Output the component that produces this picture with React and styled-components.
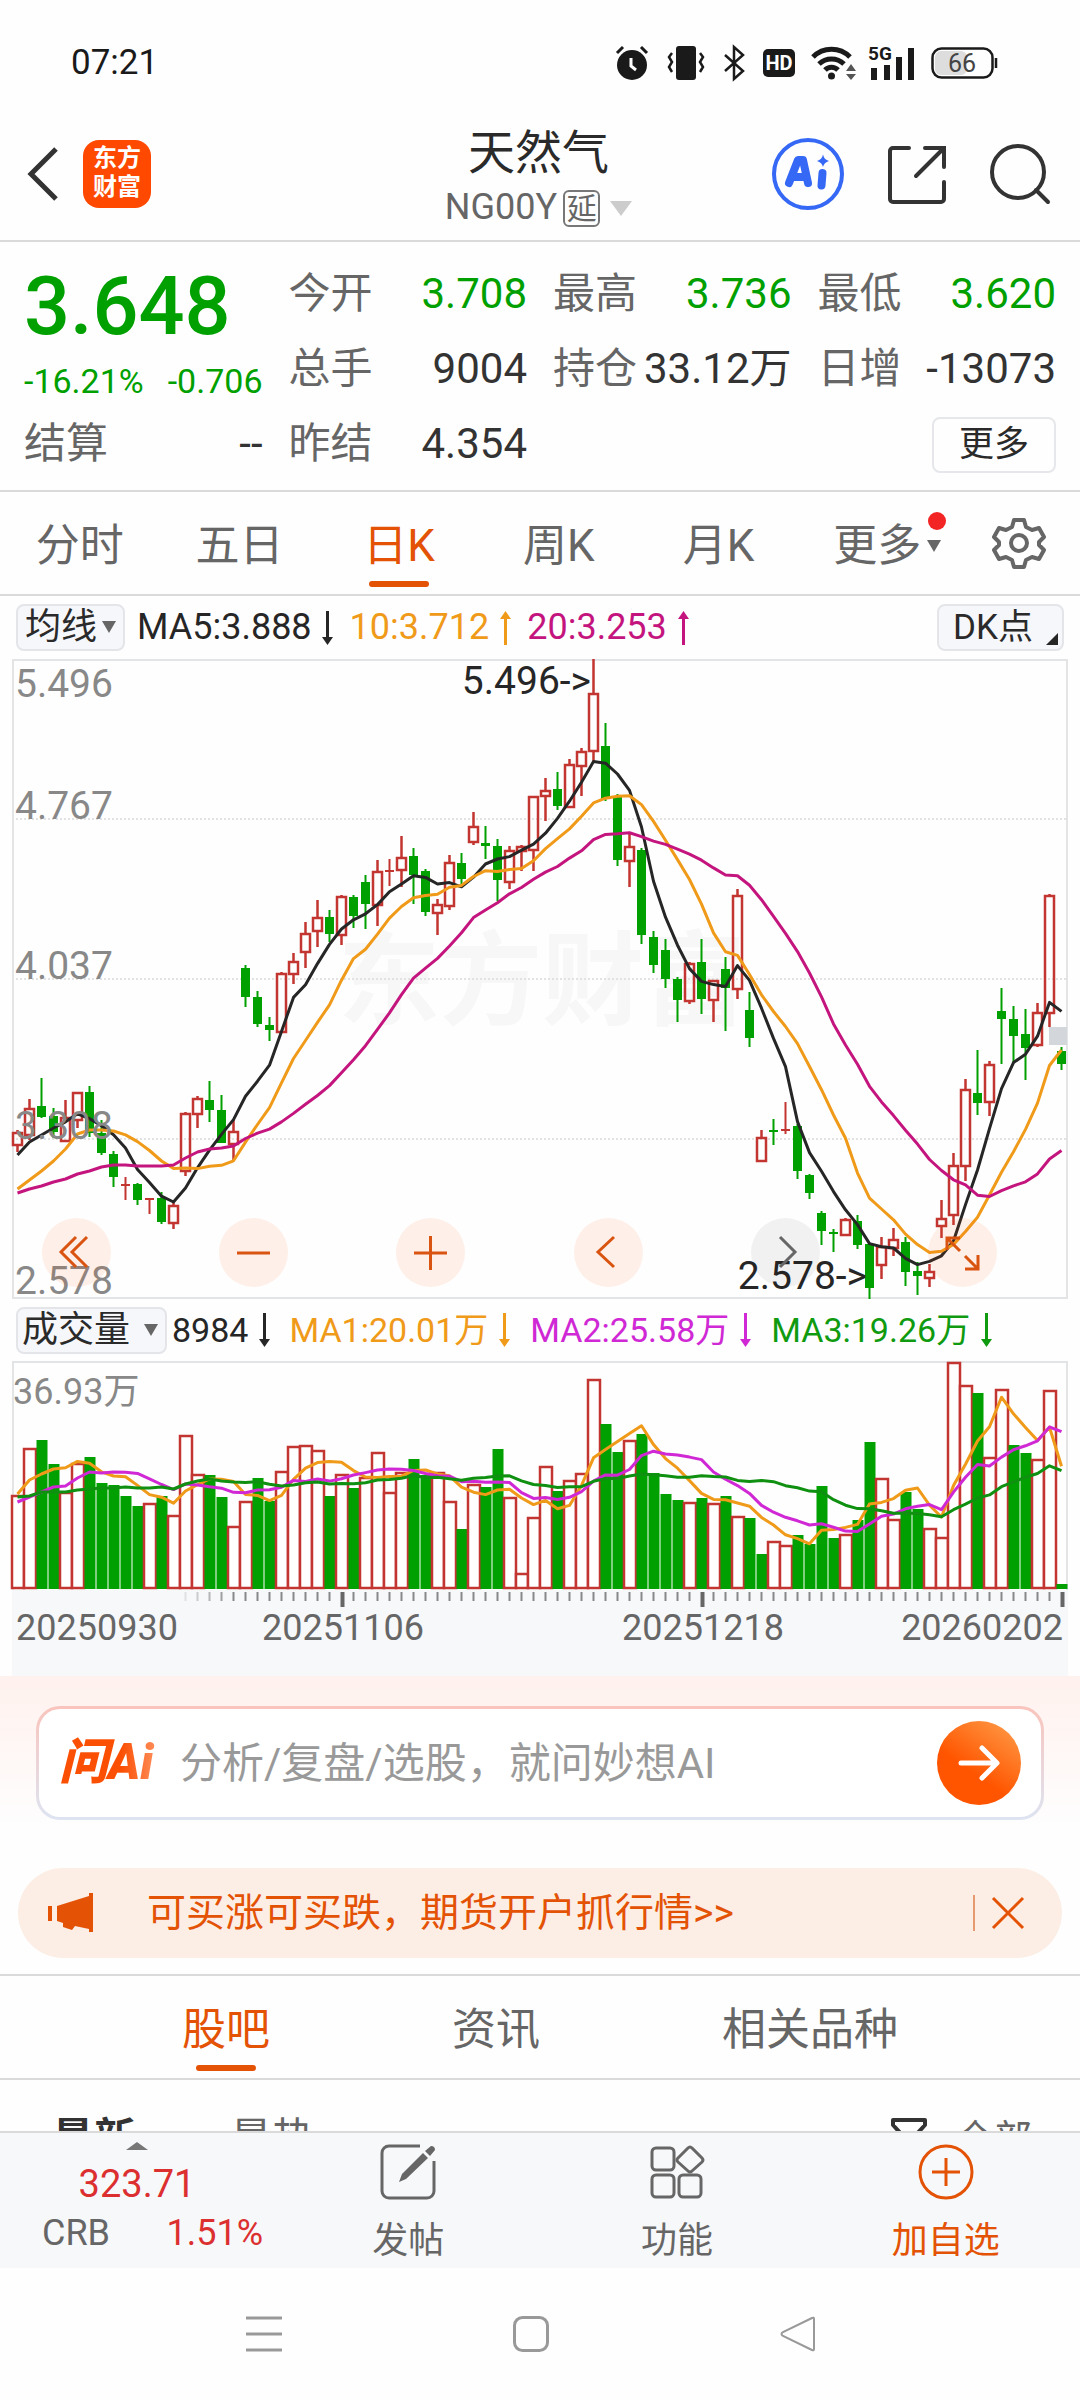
import React from "react";
import styled, { createGlobalStyle } from "styled-components";

const RED = "#c23531";
const GREEN = "#00a000";
const ORANGE = "#e35205";
const AMBER = "#f09a1a";
const PINK = "#c4157e";
const PURPLE = "#cf28d4";

// high, body top, body bottom, low (chart units from the top), rising, volume
const BARS = [
  [471, 474, 486, 493, 1, 94],
  [440, 450, 476, 481, 1, 141],
  [419, 447, 458, 459, 0, 149],
  [449, 457, 473, 479, 0, 125],
  [441, 459, 482, 482, 1, 97],
  [433, 434, 461, 469, 1, 126],
  [427, 433, 474, 478, 0, 132],
  [461, 474, 494, 496, 0, 106],
  [492, 495, 518, 528, 0, 104],
  [518, 525, 526, 541, 1, 93],
  [524, 525, 541, 546, 0, 83],
  [539, 539, 541, 555, 1, 86],
  [533, 539, 563, 565, 0, 93],
  [544, 547, 564, 570, 1, 74],
  [453, 455, 512, 517, 1, 154],
  [437, 440, 455, 469, 1, 115],
  [422, 441, 451, 463, 0, 114],
  [436, 451, 484, 484, 0, 92],
  [461, 473, 485, 501, 1, 63],
  [306, 309, 338, 348, 0, 88],
  [332, 338, 365, 368, 0, 111],
  [358, 366, 371, 382, 0, 88],
  [313, 315, 373, 373, 1, 118],
  [294, 303, 315, 325, 1, 143],
  [263, 275, 293, 309, 1, 144],
  [241, 259, 272, 288, 1, 139],
  [251, 258, 275, 283, 0, 93],
  [236, 238, 276, 286, 1, 115],
  [236, 238, 257, 269, 0, 101],
  [216, 223, 245, 270, 0, 112],
  [201, 213, 246, 267, 1, 137],
  [200, 211, 213, 227, 1, 97],
  [177, 199, 211, 228, 1, 117],
  [189, 197, 216, 245, 0, 130],
  [210, 212, 253, 257, 0, 114],
  [240, 246, 254, 276, 1, 117],
  [196, 204, 247, 251, 1, 88],
  [194, 204, 220, 226, 0, 60],
  [153, 168, 183, 186, 1, 105],
  [167, 184, 187, 200, 0, 102],
  [180, 187, 221, 242, 0, 140],
  [187, 192, 223, 230, 1, 92],
  [186, 188, 192, 212, 1, 16],
  [137, 138, 191, 212, 1, 72],
  [119, 132, 137, 162, 1, 123],
  [113, 130, 147, 151, 0, 98],
  [100, 106, 148, 148, 1, 109],
  [89, 93, 107, 137, 1, 116],
  [0, 35, 92, 103, 1, 210],
  [64, 87, 140, 142, 0, 165],
  [135, 137, 201, 207, 0, 137],
  [174, 188, 202, 228, 1, 149],
  [189, 191, 276, 285, 0, 155],
  [272, 278, 306, 314, 0, 116],
  [280, 291, 320, 329, 0, 95],
  [318, 320, 341, 363, 0, 89],
  [303, 305, 342, 345, 1, 87],
  [280, 303, 340, 355, 0, 91],
  [321, 322, 341, 363, 1, 86],
  [298, 310, 329, 372, 0, 93],
  [230, 237, 330, 340, 1, 73],
  [333, 351, 379, 388, 0, 71],
  [471, 479, 502, 502, 1, 35],
  [460, 471, 473, 486, 0, 48],
  [443, 470, 471, 475, 1, 44],
  [465, 467, 512, 520, 0, 54],
  [515, 516, 534, 540, 0, 45],
  [552, 554, 572, 586, 0, 103],
  [570, 573, 575, 593, 0, 51],
  [559, 561, 576, 576, 1, 55],
  [556, 562, 586, 590, 0, 69],
  [585, 585, 629, 640, 0, 147],
  [578, 588, 606, 620, 1, 111],
  [569, 581, 589, 597, 1, 70],
  [578, 583, 613, 627, 0, 97],
  [603, 612, 617, 636, 0, 80],
  [605, 613, 619, 628, 1, 61],
  [541, 560, 567, 579, 1, 52],
  [494, 507, 556, 566, 1, 227],
  [420, 431, 507, 522, 1, 204],
  [391, 434, 444, 456, 0, 196],
  [402, 406, 443, 457, 1, 132],
  [329, 352, 360, 405, 0, 200],
  [347, 360, 377, 404, 0, 144],
  [350, 375, 389, 421, 0, 136],
  [344, 354, 386, 388, 1, 130],
  [235, 237, 354, 368, 1, 199],
  [388, 392, 405, 411, 0, 5]
];

// averages of the days before a full window is on screen
const PRICE_HEAD = {
  5: [496, 483, 476, 469],
  10: [530, 521, 512, 502, 490, 475, 471, 471, 472],
  20: [534, 530, 527, 523, 520, 515, 512, 508, 506, 506, 507, 507, 507, 506, 499, 493, 490, 489, 487]
};
const VOLUME_HEAD = {
  5: [95, 109, 115, 120],
  10: [87, 92, 97, 102, 103, 111, 117, 116, 117],
  20: [92, 93, 97, 97, 97, 99, 100, 101, 101, 102, 101, 101, 102, 100, 105, 108, 110, 108, 107]
};

const CLOSES = BARS.map(b => (b[4] ? b[1] : b[2]));
const VOLUMES = BARS.map(b => b[5]);

const xAt = i => 5.5 + 12 * i;

const average = (values, head, size) =>
  values.map((v, i) =>
    i < size - 1
      ? head[size][i]
      : values.slice(i - size + 1, i + 1).reduce((a, b) => a + b, 0) / size
  );

const toPoints = (values, map = v => v) =>
  values.map((v, i) => `${xAt(i)},${map(v).toFixed(1)}`).join(" ");

const GlobalStyle = createGlobalStyle`
  * {
    box-sizing: border-box;
  }
  body {
    margin: 0;
    background: #fefefe;
    color: #2a2a2a;
    font-family: Roboto, "Noto Sans CJK SC", sans-serif;
    line-height: 1.2;
  }
  button, input, select {
    font-family: inherit;
    line-height: inherit;
    color: inherit;
    margin: 0;
    padding: 0;
    border: none;
    background: none;
  }
  svg {
    display: block;
    flex-shrink: 0;
    overflow: visible;
  }
`;

const Page = styled.div`
  display: flex;
  flex-direction: column;
  height: 100vh;
`;

const Content = styled.main`
  flex: 1;
  min-height: 0;
  overflow-y: auto;
  scrollbar-width: none;
`;

const StatusBar = styled.div`
  display: flex;
  align-items: center;
  justify-content: space-between;
  height: 108px;
  padding: 18px 82px 0 71px;
  font-size: 35px;
  color: #1a1a1a;
`;

const StatusIcons = styled.div`
  display: flex;
  align-items: center;
  gap: ${props => props.$gap}px;
`;

const Header = styled.header`
  display: grid;
  grid-template-columns: 1fr auto 1fr;
  align-items: center;
  height: 134px;
  padding: 0 30px 0 27px;
  border-bottom: 2px solid #dadada;
`;

const HeaderSide = styled.div`
  display: flex;
  align-items: center;
  justify-content: ${props => (props.$end ? "flex-end" : "flex-start")};
  gap: ${props => (props.$end ? 44 : 24)}px;
`;

const IconButton = styled.button`
  display: flex;
  align-items: center;
  justify-content: center;
`;

const AppLogo = styled.div`
  width: 68px;
  height: 68px;
  padding-top: 4px;
  border-radius: 16px;
  background: #ff4800;
  color: white;
  font-size: 24px;
  font-weight: 700;
  line-height: 29px;
  text-align: center;
`;

const Title = styled.h1`
  margin: 0;
  padding-top: 4px;
  font-size: 47px;
  font-weight: 400;
  line-height: 64px;
  text-align: center;
`;

const SubTitle = styled.div`
  display: flex;
  align-items: center;
  justify-content: center;
  height: 46px;
  font-size: 36px;
  color: #666;
`;

const DelayBadge = styled.span`
  width: 37px;
  height: 37px;
  margin: 0 10px 0 6px;
  border: 2px solid #777;
  border-radius: 6px;
  font-size: 30px;
  line-height: 33px;
  text-align: center;
`;

const Quote = styled.section`
  display: grid;
  grid-template-columns: repeat(4, 1fr);
  grid-template-rows: repeat(3, 75px);
  column-gap: 26px;
  height: 250px;
  padding: 15px 24px 0;
  border-bottom: 2px solid #dadada;
`;

const PriceBlock = styled.div`
  grid-row: span 2;
  color: ${GREEN};
  white-space: nowrap;
`;

const Price = styled.div`
  font-size: 81px;
  font-weight: 500;
  line-height: 100px;
`;

const Change = styled.div`
  display: flex;
  justify-content: space-between;
  font-size: 34px;
  line-height: 48px;
`;

const Stat = styled.div`
  display: flex;
  align-items: center;
  justify-content: space-between;
  font-size: 42px;
  color: ${props => (props.$green ? GREEN : "#333")};
  white-space: nowrap;
`;

const StatLabel = styled.span`
  color: #666;
`;

const MoreCell = styled.div`
  grid-column: 4;
  display: flex;
  align-items: center;
  justify-content: flex-end;
`;

const MoreButton = styled.button`
  width: 124px;
  height: 56px;
  border: 2px solid #e6e7ea;
  border-radius: 8px;
  font-size: 35px;
`;

const Periods = styled.nav`
  display: grid;
  grid-template-columns: repeat(6, 1fr) 122px;
  height: 104px;
  border-bottom: 2px solid #dadada;
`;

const Tab = styled.button`
  position: relative;
  height: 100%;
  padding-top: 6px;
  display: flex;
  align-items: center;
  justify-content: center;
  gap: 6px;
  font-size: 44px;
  color: ${props => (props.$active ? ORANGE : "#666")};
  &::after {
    content: "";
    display: ${props => (props.$active ? "block" : "none")};
    position: absolute;
    bottom: 7px;
    width: 60px;
    height: 6px;
    border-radius: 3px;
    background: ${ORANGE};
  }
`;

const MoreTab = styled(Tab)`
  padding-left: 18px;
`;

const RedDot = styled.span`
  position: absolute;
  top: 20px;
  right: 12px;
  width: 18px;
  height: 18px;
  border-radius: 50%;
  background: #f22424;
`;

const Legend = styled.div`
  display: flex;
  align-items: center;
  height: ${props => (props.$volume ? 62 : 63)}px;
  padding: 0 16px;
  font-size: ${props => (props.$volume ? 34 : 36)}px;
  white-space: nowrap;
`;

const LegendItem = styled.span`
  display: flex;
  align-items: center;
  gap: ${props => props.$gap}px;
  margin-right: ${props => props.$after}px;
  color: ${props => props.color};
`;

const Picker = styled.div`
  position: relative;
  margin-right: ${props => props.$after}px;
  svg {
    position: absolute;
    right: 9px;
    top: 17px;
    pointer-events: none;
  }
`;

const PickerSelect = styled.select`
  display: block;
  appearance: none;
  width: ${props => props.$width}px;
  height: 47px;
  padding-left: ${props => props.$pad}px;
  border: 2px solid #e3e5e9;
  border-radius: 8px;
  background: #f6f7fa;
  font-size: 36px;
`;

const DkButton = styled.button`
  display: flex;
  align-items: center;
  gap: 13px;
  height: 47px;
  margin-left: auto;
  padding: 0 4px 0 14px;
  border: 2px solid #e3e5e9;
  border-radius: 8px;
  background: #f6f7fa;
  font-size: 35px;
  svg {
    align-self: flex-end;
    margin-bottom: 4px;
  }
`;

const ChartBox = styled.div`
  position: relative;
  margin: 0 12px;
  background: ${props => (props.$axis ? "#f7f8fa" : "none")};
  > svg {
    width: 100%;
    height: auto;
  }
`;

const ChartText = styled.text`
  font-size: ${props => props.$size || 39}px;
  fill: ${props => props.$color || "#888"};
`;

const Watermark = styled.text`
  font-size: 102px;
  font-weight: 700;
  fill: #f7f7f7;
`;

const ChartControls = styled.div`
  position: absolute;
  left: 30px;
  right: 71px;
  bottom: 12px;
  display: flex;
  justify-content: space-between;
`;

const RoundButton = styled.button`
  width: 69px;
  height: 69px;
  display: flex;
  align-items: center;
  justify-content: center;
  border-radius: 50%;
  background: ${props => (props.$off ? "rgba(0, 0, 0, 0.05)" : "rgba(255, 90, 10, 0.09)")};
`;

const AskSection = styled.section`
  padding: 30px 36px 48px;
  background: linear-gradient(#fff1ed, #fefefe 80%);
`;

const AskBox = styled.form`
  display: flex;
  align-items: center;
  height: 114px;
  padding: 0 20px;
  border: 3px solid transparent;
  border-radius: 24px;
  background: linear-gradient(#fff, #fff) padding-box,
    linear-gradient(#f9c4bc, #dde4f2) border-box;
`;

const AskLogo = styled.span`
  width: 104px;
  margin-right: 17px;
  font-size: 49px;
  font-style: italic;
  font-weight: 900;
  line-height: 60px;
  white-space: nowrap;
  color: transparent;
  background: linear-gradient(90deg, #fb5004 60%, #ff9a6a);
  background-clip: text;
`;

const AskInput = styled.input`
  flex: 1;
  min-width: 0;
  height: 80px;
  font-size: 42px;
  outline: none;
  &::placeholder {
    color: #999;
    opacity: 1;
  }
`;

const SendButton = styled(IconButton)`
  width: 84px;
  height: 84px;
  border-radius: 50%;
  background: linear-gradient(215deg, #ff9440 10%, #ff5500 60%);
`;

const Banner = styled.div`
  display: flex;
  align-items: center;
  height: 90px;
  margin: 0 18px 16px;
  padding: 0 37px 0 30px;
  border-radius: 45px;
  background: #fceee5;
  color: ${ORANGE};
`;

const BannerLink = styled.a`
  flex: 1;
  margin-left: 52px;
  font-size: 39px;
  color: inherit;
  text-decoration: none;
  white-space: nowrap;
`;

const Divider = styled.span`
  width: 2px;
  height: 36px;
  margin-right: 16px;
  background: #e69a70;
`;

const Sections = styled.nav`
  display: flex;
  justify-content: space-evenly;
  height: 106px;
  border-top: 2px solid #dadada;
  border-bottom: 2px solid #dadada;
`;

const FeedBar = styled.div`
  display: flex;
  align-items: center;
  height: 104px;
  padding: 14px 48px 0 52px;
  line-height: 60px;
`;

const FeedSort = styled.button`
  margin-right: 94px;
  font-size: 42px;
  font-weight: ${props => (props.$active ? 700 : 400)};
  color: ${props => (props.$active ? "#333" : "#666")};
`;

const FeedFilter = styled.button`
  display: flex;
  align-items: center;
  gap: 28px;
  margin-left: auto;
  font-size: 38px;
  color: #666;
`;

const BottomBar = styled.footer`
  display: flex;
  height: 137px;
  border-top: 2px solid #dadada;
  background: #f7f8fa;
`;

const IndexBlock = styled.div`
  width: 274px;
  display: flex;
  flex-direction: column;
  align-items: center;
  padding-top: 9px;
  font-size: 36px;
  color: #dc2f2f;
`;

const IndexValue = styled.div`
  margin: 10px 0 2px;
  font-size: 38px;
  line-height: 48px;
`;

const IndexRow = styled.div`
  display: flex;
  justify-content: space-between;
  width: 100%;
  padding: 0 11px 0 42px;
  line-height: 46px;
`;

const IndexName = styled.span`
  color: #666;
`;

const Action = styled.button`
  flex: 1;
  display: flex;
  flex-direction: column;
  align-items: center;
  gap: 17px;
  padding-top: 11px;
  font-size: 36px;
  line-height: 48px;
  color: ${props => (props.$accent ? ORANGE : "#666")};
`;

const NavBar = styled.div`
  display: grid;
  grid-template-columns: repeat(3, 1fr);
  height: 132px;
  padding: 0 148px 0 130px;
  color: #999;
`;

function Caret({ width = 14, height = 12, color = "#666", up }) {
  const d = up ? `M0 ${height}H${width}L${width / 2} 0Z` : `M0 0H${width}L${width / 2} ${height}Z`;
  return (
    <svg width={width} height={height}>
      <path d={d} fill={color} />
    </svg>
  );
}

function TrendArrow({ up }) {
  return (
    <svg width="12" height="34" viewBox="0 0 12 34">
      <g transform={up ? "" : "rotate(180 6 17)"} fill="currentColor">
        <path d="M5 4h3v30H5z" />
        <path d="M6.500 0L12 8H1z" />
      </g>
    </svg>
  );
}

function StatusGlyphs() {
  return (
    <StatusIcons $gap={16}>
      <StatusIcons $gap={18}>
        <svg width="34" height="36" viewBox="0 0 34 36">
          <circle cx="17" cy="20" r="15" fill="#1a1a1a" />
          <path d="M2 8L8 2M32 8L26 2" stroke="#1a1a1a" strokeWidth="3" />
          <path d="M16 13v8l5 4" fill="none" stroke="#fff" strokeWidth="3" />
        </svg>
        <svg width="38" height="36" viewBox="0 0 38 36">
          <rect x="9" y="1" width="20" height="34" rx="3" fill="#1a1a1a" />
          <path
            d="M5 8l-3 4 3 5-3 5 3 5M33 8l3 4-3 5 3 5-3 5"
            fill="none"
            stroke="#1a1a1a"
            strokeWidth="2.500"
          />
        </svg>
        <svg width="22" height="36" viewBox="1 0 22 36">
          <path
            d="M3 10l18 16-9 8V2l9 8L3 26"
            fill="none"
            stroke="#1a1a1a"
            strokeWidth="2.500"
          />
        </svg>
        <svg width="32" height="28" viewBox="0 0 32 28">
          <rect width="32" height="28" rx="5" fill="#1a1a1a" />
          <text x="16" y="21" textAnchor="middle" fontSize="20" fontWeight="700" fill="#fff">
            HD
          </text>
        </svg>
      </StatusIcons>
      <StatusIcons $gap={12}>
        <svg width="45" height="36" viewBox="0 0 45 36">
          <g fill="none" stroke="#1a1a1a" strokeWidth="5">
            <path d="M2 12a26 26 0 0 1 37 0" />
            <path d="M8 19a18 18 0 0 1 25 0" />
            <path d="M14 25a9 9 0 0 1 13 0" />
          </g>
          <circle cx="20.500" cy="31" r="3.500" fill="#1a1a1a" />
          <path d="M35 26l5-7 5 7zM35 29h10l-5 6z" fill="#555" />
        </svg>
        <svg width="47" height="36" viewBox="0 0 47 36">
          <text x="0" y="15" fontSize="19" fontWeight="700" fill="#1a1a1a">
            5G
          </text>
          <path d="M3 23h6v12H3zM16 20h6v15h-6zM28 12h6v23h-6zM40 3h6v32h-6z" fill="#1a1a1a" />
        </svg>
      </StatusIcons>
      <svg width="67" height="32" viewBox="0 0 67 32">
        <rect x="4" y="4" width="32" height="24" rx="6" fill="#ddd" />
        <rect x="1.500" y="1.500" width="60" height="29" rx="9" fill="none" stroke="#1a1a1a" strokeWidth="2.500" />
        <path d="M65 11v10" stroke="#1a1a1a" strokeWidth="2.500" />
        <text x="31" y="25" textAnchor="middle" fontSize="25" fill="#444">
          66
        </text>
      </svg>
    </StatusIcons>
  );
}

function PriceChart() {
  return (
    <svg viewBox="0 0 1056 640" role="img" aria-label="日K">
      <Watermark x="326" y="358">
        东方财富
      </Watermark>
      {[160, 320, 480].map(y => (
        <path key={y} d={`M0 ${y}H1055`} stroke="#e2e2e2" strokeWidth="2" strokeDasharray="2 2" />
      ))}
      <rect x="1" y="1" width="1054" height="638" fill="none" stroke="#e3e4e6" strokeWidth="2" />
      {BARS.map(([high, top, bottom, low, up], i) => {
        const x = xAt(i);
        if (!up || bottom - top < 4) {
          const color = up ? RED : GREEN;
          return (
            <g key={i} fill={color}>
              <rect x={x - 1} y={high} width="2" height={low - high} />
              <rect x={x - 4.5} y={top} width="9" height={Math.max(2, bottom - top)} />
            </g>
          );
        }
        return (
          <g key={i} fill="none" stroke={RED} strokeWidth="2.500">
            <path d={`M${x} ${high}V${top}M${x} ${bottom}V${low}`} />
            <rect x={x - 4.5} y={top} width="9" height={bottom - top} />
          </g>
        );
      })}
      <g fill="none" strokeWidth="3" strokeLinejoin="round">
        <polyline points={toPoints(average(CLOSES, PRICE_HEAD, 5))} stroke="#262626" />
        <polyline points={toPoints(average(CLOSES, PRICE_HEAD, 10))} stroke={AMBER} />
        <polyline points={toPoints(average(CLOSES, PRICE_HEAD, 20))} stroke={PINK} />
      </g>
      <rect x="1037" y="368" width="18" height="18" fill="#d3d6db" />
      <ChartText x="3" y="38">5.496</ChartText>
      <ChartText x="3" y="160">4.767</ChartText>
      <ChartText x="3" y="320">4.037</ChartText>
      <ChartText x="3" y="480">3.308</ChartText>
      <ChartText x="3" y="635">2.578</ChartText>
      <ChartText x="579" y="35" textAnchor="end" $color="#262626">
        5.496-&gt;
      </ChartText>
      <ChartText x="855" y="630" textAnchor="end" $color="#262626">
        2.578-&gt;
      </ChartText>
    </svg>
  );
}

function VolumeChart() {
  const flip = v => 228 - v;
  return (
    <svg viewBox="0 0 1056 229" role="img" aria-label="成交量">
      <path d="M1 229V1H1055V229" fill="none" stroke="#e3e4e6" strokeWidth="2" />
      {VOLUMES.map((v, i) => {
        const x = xAt(i);
        const up = i === 0 || CLOSES[i] < CLOSES[i - 1];
        return up ? (
          <rect
            key={i}
            x={x - 5.5}
            y={229 - v}
            width="12"
            height={v - 2}
            fill="#fff"
            stroke={RED}
            strokeWidth="2.500"
          />
        ) : (
          <rect key={i} x={x - 5} y={flip(v)} width="11" height={v} fill={GREEN} />
        );
      })}
      <g fill="none" strokeWidth="3" strokeLinejoin="round">
        <polyline points={toPoints(average(VOLUMES, VOLUME_HEAD, 5), flip)} stroke={AMBER} />
        <polyline points={toPoints(average(VOLUMES, VOLUME_HEAD, 10), flip)} stroke={PURPLE} />
        <polyline points={toPoints(average(VOLUMES, VOLUME_HEAD, 20), flip)} stroke="#0f9010" />
      </g>
      <ChartText x="1" y="43" $size={36}>
        36.93万
      </ChartText>
    </svg>
  );
}

function DateAxis() {
  const marks = [27, 57, 87];
  return (
    <svg viewBox="0 0 1056 86">
      {BARS.map((b, i) => {
        if (i < 14) return null;
        const major = marks.includes(i);
        return (
          <rect
            key={i}
            x={xAt(i) - 1}
            y="2"
            width={major ? 4 : 2}
            height={major ? 15 : 9}
            fill={major ? "#666" : "#888"}
            opacity={Math.min(1, (i - 13) / 5)}
          />
        );
      })}
      <ChartText x="4" y="50" $size={36} $color="#666">20250930</ChartText>
      <ChartText x="331" y="50" textAnchor="middle" $size={36} $color="#666">20251106</ChartText>
      <ChartText x="691" y="50" textAnchor="middle" $size={36} $color="#666">20251218</ChartText>
      <ChartText x="1051" y="50" textAnchor="end" $size={36} $color="#666">20260202</ChartText>
    </svg>
  );
}

const STATS = [
  ["今开", "3.708", true],
  ["最高", "3.736", true],
  ["最低", "3.620", true],
  ["总手", "9004"],
  ["持仓", "33.12万"],
  ["日增", "-13073"],
  ["结算", "--"],
  ["昨结", "4.354"]
];

const CONTROLS = [
  { name: "最早", d: "M17 1L2 16l15 15M28 1L13 16l15 15" },
  { name: "缩小", d: "M1 17h33" },
  { name: "放大", d: "M1 17h33M17.500 0v34" },
  { name: "向左", d: "M23 1L7 16l16 15" },
  { name: "向右", d: "M12 1l15 15-15 15", off: true },
  { name: "全屏", d: "M2 14V2h13M2 2l13 13M20 20l12 12M33 19v14H20" }
];

function App() {
  return (
    <Page>
      <GlobalStyle />
      <Content>
        <StatusBar>
          <span>07:21</span>
          <StatusGlyphs />
        </StatusBar>
        <Header>
          <HeaderSide>
            <IconButton aria-label="返回">
              <svg width="32" height="54" viewBox="0 0 32 54">
                <path d="M29 2L4 27l25 25" fill="none" stroke="#333" strokeWidth="5" />
              </svg>
            </IconButton>
            <AppLogo>
              东方
              <br />
              财富
            </AppLogo>
          </HeaderSide>
          <div>
            <Title>天然气</Title>
            <SubTitle>
              NG00Y
              <DelayBadge>延</DelayBadge>
              <Caret width={22} height={15} color="#ccc" />
            </SubTitle>
          </div>
          <HeaderSide $end>
            <IconButton aria-label="Ai">
              <svg width="72" height="72" viewBox="0 0 72 72">
                <circle cx="36" cy="36" r="34" fill="none" stroke="#3568f5" strokeWidth="4" />
                <path
                  d="M17 45L26 22h5l5 23M23 39h10"
                  fill="none"
                  stroke="#3568f5"
                  strokeWidth="8"
                  strokeLinejoin="round"
                  strokeLinecap="round"
                />
                <path d="M50.500 35l-1 12.500" stroke="#3568f5" strokeWidth="8" strokeLinecap="round" />
                <path d="M51 16.500q1 5 6 6.500-5 1.500-6 6-1-4.500-6-6 5-1.500 6-6.500z" fill="#3568f5" />
              </svg>
            </IconButton>
            <IconButton aria-label="分享">
              <svg width="58" height="58" viewBox="0 0 58 58" fill="none" stroke="#333" strokeWidth="4">
                <path d="M21 3H5a3 3 0 0 0-3 3v48a3 3 0 0 0 3 3h48a3 3 0 0 0 3-3V37" strokeLinecap="round" />
                <path d="M37 3h19v19M55 4L28 31" strokeLinecap="round" />
              </svg>
            </IconButton>
            <IconButton aria-label="搜索">
              <svg width="60" height="60" viewBox="0 0 60 60" fill="none" stroke="#333" strokeWidth="4">
                <circle cx="28" cy="28" r="26" />
                <path d="M46 46l12 12" strokeLinecap="round" />
              </svg>
            </IconButton>
          </HeaderSide>
        </Header>

        <Quote>
          <PriceBlock>
            <Price>3.648</Price>
            <Change>
              <span>-16.21%</span>
              <span>-0.706</span>
            </Change>
          </PriceBlock>
          {STATS.map(([label, value, green]) => (
            <Stat key={label} $green={green}>
              <StatLabel>{label}</StatLabel>
              {value}
            </Stat>
          ))}
          <MoreCell>
            <MoreButton>更多</MoreButton>
          </MoreCell>
        </Quote>

        <Periods>
          <Tab>分时</Tab>
          <Tab>五日</Tab>
          <Tab $active>日K</Tab>
          <Tab>周K</Tab>
          <Tab>月K</Tab>
          <MoreTab>
            更多
            <Caret />
            <RedDot />
          </MoreTab>
          <IconButton aria-label="设置">
            <svg width="52" height="52" viewBox="0 0 52 52" fill="none" stroke="#666" strokeWidth="4">
              <path
                d="M21 3h10l2 7 6 3 7-2 5 9-5 5v3l5 5-5 9-7-2-6 3-2 7H21l-2-7-6-3-7 2-5-9 5-5v-3l-5-5 5-9 7 2 6-3z"
                strokeLinejoin="round"
              />
              <circle cx="26" cy="26" r="8" />
            </svg>
          </IconButton>
        </Periods>

        <Legend>
          <Picker $after={12}>
            <PickerSelect aria-label="主图指标" $width={109} $pad={7}>
              <option>均线</option>
            </PickerSelect>
            <Caret />
          </Picker>
          <LegendItem color="#262626" $gap={10} $after={16}>
            MA5:3.888 <TrendArrow />
          </LegendItem>
          <LegendItem color={AMBER} $gap={10} $after={16}>
            10:3.712 <TrendArrow up />
          </LegendItem>
          <LegendItem color={PINK} $gap={10} $after={16}>
            20:3.253 <TrendArrow up />
          </LegendItem>
          <DkButton>
            DK点
            <svg width="12" height="12">
              <path d="M12 0v12H0z" fill="#262626" />
            </svg>
          </DkButton>
        </Legend>

        <ChartBox>
          <PriceChart />
          <ChartControls>
            {CONTROLS.map(({ name, d, off }) => (
              <RoundButton key={name} aria-label={name} $off={off}>
                <svg width="35" height="34" viewBox="0 0 35 34">
                  <path d={d} fill="none" stroke={off ? "#666" : "#d95410"} strokeWidth="3" />
                </svg>
              </RoundButton>
            ))}
          </ChartControls>
        </ChartBox>

        <Legend $volume>
          <Picker $after={5}>
            <PickerSelect aria-label="副图指标" $width={151} $pad={4}>
              <option>成交量</option>
            </PickerSelect>
            <Caret />
          </Picker>
          <LegendItem color="#262626" $gap={11} $after={18}>
            8984 <TrendArrow />
          </LegendItem>
          <LegendItem color={AMBER} $gap={11} $after={19}>
            MA1:20.01万 <TrendArrow />
          </LegendItem>
          <LegendItem color={PURPLE} $gap={11} $after={19}>
            MA2:25.58万 <TrendArrow />
          </LegendItem>
          <LegendItem color="#0f9a10" $gap={11} $after={0}>
            MA3:19.26万 <TrendArrow />
          </LegendItem>
        </Legend>
        <ChartBox>
          <VolumeChart />
        </ChartBox>
        <ChartBox $axis>
          <DateAxis />
        </ChartBox>

        <AskSection>
          <AskBox onSubmit={e => e.preventDefault()}>
            <AskLogo>问Ai</AskLogo>
            <AskInput aria-label="问Ai" placeholder="分析/复盘/选股，就问妙想AI" />
            <SendButton aria-label="发送">
              <svg width="42" height="38" viewBox="0 0 42 38">
                <path
                  d="M3 19h35M24 4l15 15-15 15"
                  fill="none"
                  stroke="#fff"
                  strokeWidth="5"
                  strokeLinecap="round"
                  strokeLinejoin="round"
                />
              </svg>
            </SendButton>
          </AskBox>
        </AskSection>

        <Banner>
          <svg width="47" height="40" viewBox="0 0 47 40" fill={ORANGE}>
            <path d="M0 13h4v15H0zM9 13l32-10V0h4v39h-4v-3l-14-3-3 4-9-3v-4l-6-2z" />
          </svg>
          <BannerLink href="#open">可买涨可买跌，期货开户抓行情&gt;&gt;</BannerLink>
          <Divider />
          <IconButton aria-label="关闭">
            <svg width="34" height="34" viewBox="0 0 34 34">
              <path d="M2 2l30 30M32 2L2 32" stroke={ORANGE} strokeWidth="3" />
            </svg>
          </IconButton>
        </Banner>

        <Sections>
          <Tab $active>股吧</Tab>
          <Tab>资讯</Tab>
          <Tab>相关品种</Tab>
        </Sections>
        <FeedBar>
          <FeedSort $active>最新</FeedSort>
          <FeedSort>最热</FeedSort>
          <FeedFilter>
            <svg width="38" height="40" viewBox="0 0 38 40">
              <path
                d="M3 1h32v5L24 18v17l-10-5V18L3 6z"
                fill="none"
                stroke="#333"
                strokeWidth="4"
                strokeLinejoin="round"
              />
            </svg>
            全部
          </FeedFilter>
        </FeedBar>
      </Content>

      <BottomBar>
        <IndexBlock>
          <Caret width={22} height={8} color="#777" up />
          <IndexValue>323.71</IndexValue>
          <IndexRow>
            <IndexName>CRB</IndexName>
            1.51%
          </IndexRow>
        </IndexBlock>
        <Action>
          <svg width="56" height="56" viewBox="0 0 56 56">
            <path
              d="M40 2H9a7 7 0 0 0-7 7v38a7 7 0 0 0 7 7h38a7 7 0 0 0 7-7V17"
              fill="none"
              stroke="#666"
              strokeWidth="3"
            />
            <path d="M43 9l5 5-22 21-7 3 3-8zM45 7l6-5q4 0 4 4l-5 6z" fill="#666" />
          </svg>
          发帖
        </Action>
        <Action>
          <svg width="56" height="56" viewBox="0 0 56 56" fill="none" stroke="#666" strokeWidth="3">
            <rect x="3" y="4" width="22" height="22" rx="4" />
            <rect x="3" y="31" width="22" height="22" rx="4" />
            <rect x="30" y="31" width="22" height="22" rx="4" />
            <path d="M39 4q2-2 4 0l10 10q2 2 0 4L43 27q-2 2-4 0L29 18q-2-2 0-4z" />
          </svg>
          功能
        </Action>
        <Action $accent>
          <svg width="56" height="56" viewBox="0 0 56 56" fill="none" stroke={ORANGE} strokeWidth="3">
            <circle cx="28" cy="28" r="26" />
            <path d="M14 28h28M28 14v28" />
          </svg>
          加自选
        </Action>
      </BottomBar>
      <NavBar>
        <IconButton aria-label="菜单">
          <svg width="36" height="36" viewBox="0 0 36 36">
            <path d="M0 2h36M0 18h36M0 34h36" stroke="#999" strokeWidth="3" />
          </svg>
        </IconButton>
        <IconButton aria-label="主页">
          <svg width="36" height="36" viewBox="0 0 36 36">
            <rect x="1.500" y="1.500" width="33" height="33" rx="8" fill="none" stroke="#999" strokeWidth="3" />
          </svg>
        </IconButton>
        <IconButton aria-label="后退">
          <svg width="36" height="36" viewBox="0 0 36 36">
            <path
              d="M34 3v30q0 2-2 1L3 20q-3-2 0-4L32 2q2-1 2 1z"
              fill="none"
              stroke="#999"
              strokeWidth="2"
            />
          </svg>
        </IconButton>
      </NavBar>
    </Page>
  );
}

export default App;
